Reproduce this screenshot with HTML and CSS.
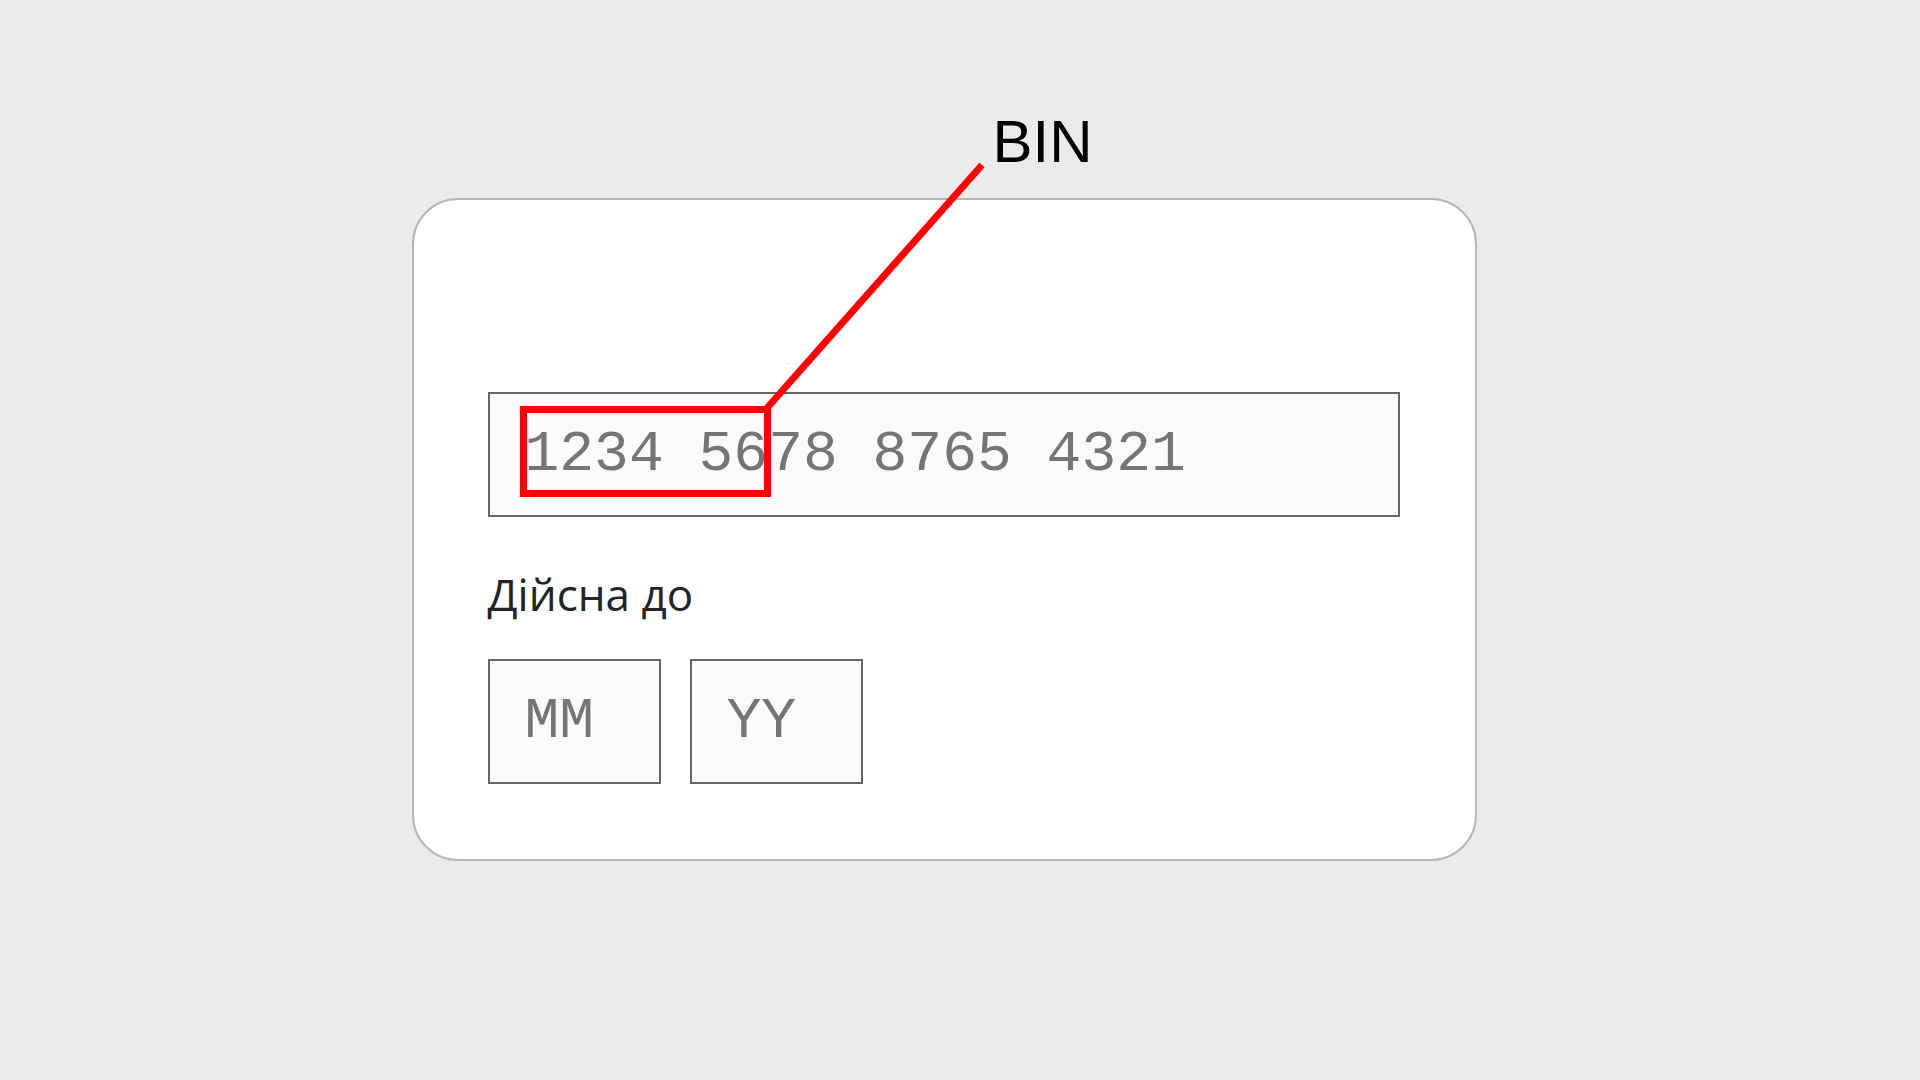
FILE: index.html
```html
<!DOCTYPE html>
<html lang="uk">
<head>
<meta charset="utf-8">
<meta name="viewport" content="width=device-width, initial-scale=1">
<title>BIN</title>
<link rel="stylesheet" href="styles.css">
</head>
<body>
<main class="page">
  <form class="card">
    <input class="field" type="text" aria-label="BIN" placeholder="1234 5678 8765 4321">
    <fieldset class="expiry">
      <legend class="expiry-label">Дійсна до</legend>
      <div class="expiry-fields">
        <input class="field field-short" type="text" aria-label="MM" placeholder="MM">
        <input class="field field-short" type="text" aria-label="YY" placeholder="YY">
      </div>
    </fieldset>
    <div class="frame"></div>
    <svg class="pointer" width="570" height="300" aria-hidden="true">
      <line x1="353" y1="208" x2="568" y2="-35"/>
    </svg>
    <span class="callout">BIN</span>
  </form>
</main>
</body>
</html>
```
FILE: styles.css
```css
* {
  box-sizing: border-box;
}

body {
  margin: 0;
  min-height: 100vh;
  background: #ebebeb;
}

.page {
  display: flex;
  justify-content: center;
  padding: 198px 32px 32px 0;
}

.card {
  position: relative;
  width: 100%;
  max-width: 1065px;
  padding: 192px 75px 75px 74px;
  border: 2px solid #b7b7b7;
  border-radius: 46px;
  background: #fff;
}

.field {
  display: block;
  width: 100%;
  height: 125px;
  padding: 0 35px;
  border: 2px solid #666;
  border-radius: 0;
  background: #fafafa;
  color: #757575;
  font: 58px "Liberation Mono", monospace;
}

.field::placeholder {
  color: #757575;
  opacity: 1;
}

.expiry {
  margin: 44px 0 0;
  padding: 0;
  border: 0;
}

.expiry-label {
  padding: 0;
  color: #212529;
  font: 44px/66px "Open Sans", sans-serif;
}

.expiry-fields {
  display: flex;
  gap: 29px;
  padding-top: 32px;
}

.field-short {
  width: 173px;
}

/* Red frame and leader line drawn over the card number */
.frame {
  position: absolute;
  top: 206px;
  left: 106px;
  width: 251px;
  height: 91px;
  border: 7px solid #f00;
  pointer-events: none;
}

.pointer {
  position: absolute;
  top: 0;
  left: 0;
  overflow: visible;
  stroke: #f00;
  stroke-width: 7px;
  pointer-events: none;
}

.callout {
  position: absolute;
  top: -92px;
  left: 579px;
  color: #000;
  font: 60px/68px "Liberation Sans", sans-serif;
}
```
